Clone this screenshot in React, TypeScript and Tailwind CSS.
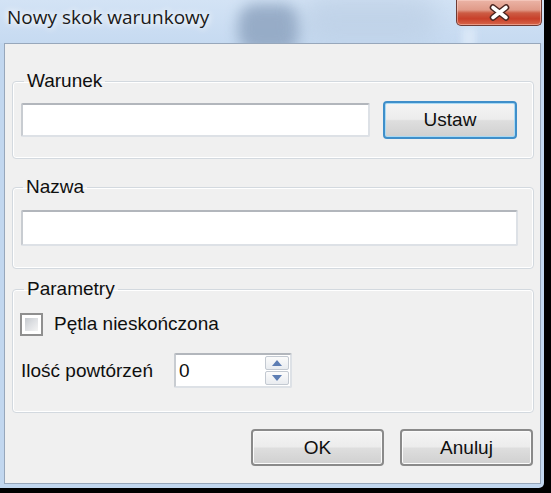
import React from "react";

const lbl = "font-['Liberation_Sans',Arial,sans-serif] text-[19px] leading-[22px] text-[#0f0f0f]";
const btn =
  "flex items-center justify-center rounded-[4px] border-2 border-[#8a8a8a] bg-[linear-gradient(#f4f4f4_0%,#ececec_48%,#dedede_52%,#d0d0d0_100%)] shadow-[inset_0_0_0_1px_#fbfbfb] " +
  lbl;
const input =
  "bg-white border-2 border-[#dde1e6] border-t-[#b2b6bc] border-l-[#c8ccd1] rounded-[2px]";
const group =
  "mx-[7px] w-[522px] rounded-[4px] border border-[#d3d9df] shadow-[inset_0_0_0_1px_#ffffff]";
const legend = "px-[3px] " + lbl;

function CloseButton() {
  return (
    <div className="relative mr-[2px] w-[86px] h-[26px] rounded-b-[5px] border border-t-0 border-[#6e3a33] bg-[linear-gradient(#ebb4a6_0%,#e09a88_40%,#cc5c44_52%,#c8402a_75%,#d8664a_100%)] shadow-[inset_0_0_0_1px_rgba(255,220,210,0.45)]">
      <svg width="86" height="26" viewBox="0 0 86 26" className="absolute left-[-1px] top-0">
        <path d="M37 7.5 L50 17.5 M50 7.5 L37 17.5" stroke="#4a2520" strokeWidth="6.5" strokeLinecap="round" fill="none" />
        <path d="M37 7.5 L50 17.5 M50 7.5 L37 17.5" stroke="#ffffff" strokeWidth="3.6" strokeLinecap="round" fill="none" />
      </svg>
    </div>
  );
}

function SpinArrow({ up }: { up: boolean }) {
  return (
    <div className="flex-1 flex items-center justify-center border border-[#c3c9d1] rounded-[2px] bg-[linear-gradient(#fbfbfb,#e9ecf0)]">
      <svg width="10" height="6" viewBox="0 0 10 6">
        {up ? <path d="M0 6 L5 0 L10 6 Z" fill="#5d7db3" /> : <path d="M0 0 L5 6 L10 0 Z" fill="#5d7db3" />}
      </svg>
    </div>
  );
}

export default function App() {
  return (
    <div className="w-[551px] h-[493px] bg-black overflow-hidden">
      <div className="w-[544px] h-[488px] flex flex-col bg-[#c2d7ef] rounded-br-[5px] overflow-hidden">
        {/* title bar */}
        <div className="relative h-[43px] flex items-start justify-between bg-[linear-gradient(#d3e3f5,#c6daf1)] overflow-hidden">
          <div className="absolute left-[238px] top-[4px] w-[62px] h-[48px] rounded-[18px] bg-[#8ea4c0] blur-[7px] opacity-85" />
          <div className="absolute left-[300px] top-[-6px] w-[140px] h-[50px] rounded-full bg-[#b9cce2] blur-[12px] opacity-60" />
          <div className="absolute left-[462px] top-[28px] w-[14px] h-[20px] bg-[#d9e7f7] blur-[3px]" />
          <div className="relative pl-[7px] pt-[4px] font-['Open_Sans',sans-serif] text-[19px] leading-[26px] text-[#1a1a1a] [text-shadow:0_0_6px_#ffffff,0_0_10px_#ffffff]">
            Nowy skok warunkowy
          </div>
          <CloseButton />
        </div>

        {/* client */}
        <div className="ml-[4px] w-[537px] h-[441px] border border-[#97a7bb] bg-[#f0f0f0] flex flex-col">
          <fieldset className={group + " mt-[26px] pl-[8px] pr-[16px] pt-[9px] pb-[19px]"}>
            <legend className={legend + " ml-[3px]"}>Warunek</legend>
            <div className="flex items-center h-[38px]">
              <div className={input + " w-[349px] h-[34px]"} />
              <div
                className={
                  "ml-[13px] w-[134px] h-[38px] flex items-center justify-center rounded-[4px] border-2 border-[#3f8fca] bg-[linear-gradient(#f4f4f4_0%,#ececec_48%,#dedede_52%,#d0d0d0_100%)] shadow-[inset_0_0_0_1px_#a9daf4] " +
                  lbl
                }
              >
                Ustaw
              </div>
            </div>
          </fieldset>

          <fieldset className={group + " mt-[17px] pl-[8px] pr-[15px] pt-[12px] pb-[22px]"}>
            <legend className={legend + " ml-[2px]"}>Nazwa</legend>
            <div className={input + " w-[497px] h-[36px]"} />
          </fieldset>

          <fieldset className={group + " mt-[9px] pl-[7px] pt-[12px] pb-[24px]"}>
            <legend className={legend + " ml-[4px]"}>Parametry</legend>
            <div className="flex items-center h-[24px]">
              <div className="w-[23px] h-[23px] border-2 border-[#8f8f8f] bg-white p-[3px]">
                <div className="w-full h-full bg-[linear-gradient(135deg,#c5c9ce_0%,#dfe1e4_50%,#f4f4f4_100%)]" />
              </div>
              <span className={lbl + " ml-[11px]"}>Pętla nieskończona</span>
            </div>
            <div className="flex items-center mt-[17px] pl-[1px]">
              <span className={lbl}>Ilość powtórzeń</span>
              <div className={input + " ml-[21px] w-[118px] h-[35px] flex items-stretch p-[1px]"}>
                <div className={lbl + " flex-1 flex items-center pl-[2px]"}>0</div>
                <div className="w-[24px] flex flex-col gap-[1px]">
                  <SpinArrow up />
                  <SpinArrow up={false} />
                </div>
              </div>
            </div>
          </fieldset>

          <div className="flex justify-end gap-[16px] mt-[16px] pr-[7px]">
            <div className={btn + " w-[133px] h-[37px]"}>OK</div>
            <div className={btn + " w-[133px] h-[37px]"}>Anuluj</div>
          </div>
        </div>
      </div>
    </div>
  );
}
